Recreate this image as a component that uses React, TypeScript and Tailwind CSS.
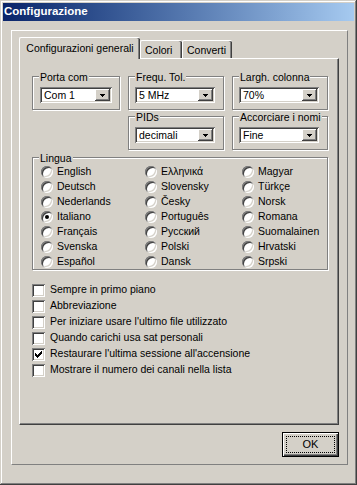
import React from 'react';

const sunken =
  'shadow-[inset_1px_1px_#808080,inset_-1px_-1px_#ffffff,inset_2px_2px_#404040,inset_-2px_-2px_#d4d0c8]';

const LANGS: string[][] = [
  ['English', 'Deutsch', 'Nederlands', 'Italiano', 'Français', 'Svenska', 'Español'],
  ['Ελληνικά', 'Slovensky', 'Česky', 'Português', 'Русский', 'Polski', 'Dansk'],
  ['Magyar', 'Türkçe', 'Norsk', 'Romana', 'Suomalainen', 'Hrvatski', 'Srpski'],
];

const OPTIONS = [
  { label: 'Sempre in primo piano', checked: false },
  { label: 'Abbreviazione', checked: false },
  { label: "Per iniziare usare l'ultimo file utilizzato", checked: false },
  { label: 'Quando carichi usa sat personali', checked: false },
  { label: "Restaurare l'ultima sessione all'accensione", checked: true },
  { label: 'Mostrare il numero dei canali nella lista', checked: false },
];

const GroupBox: React.FC<{ title: string; className?: string; children?: React.ReactNode }> = ({
  title,
  className = '',
  children,
}) => (
  <div
    className={`relative border border-[#808080] shadow-[1px_1px_0_#ffffff,inset_1px_1px_0_#ffffff] ${className}`}
  >
    <span className="absolute left-[6px] -top-[6px] bg-[#d4d0c8] px-px leading-[12px] whitespace-nowrap">
      {title}
    </span>
    {children}
  </div>
);

const Combo: React.FC<{ value: string; width: string }> = ({ value, width }) => (
  <div className={`flex h-[16px] items-stretch bg-white p-[2px] ${sunken} ${width}`}>
    <span className="flex flex-1 items-center pl-[2px] leading-none">{value}</span>
    <div className="flex w-[15px] items-center justify-center bg-[#d4d0c8] shadow-[inset_-1px_-1px_#404040,inset_1px_1px_#ffffff,inset_-2px_-2px_#808080]">
      <svg width="5" height="3" viewBox="0 0 5 3" shapeRendering="crispEdges">
        <path d="M0 0h5v1H0z M1 1h3v1H1z M2 2h1v1H2z" fill="#000" />
      </svg>
    </div>
  </div>
);

const Radio: React.FC<{ label: string; checked?: boolean }> = ({ label, checked }) => (
  <div className="flex h-[15px] items-center">
    <div
      className={`flex h-[12px] w-[12px] shrink-0 items-center justify-center rounded-full bg-white ${sunken}`}
    >
      {checked && <div className="h-[4px] w-[4px] rounded-full bg-black" />}
    </div>
    <span className="ml-[4px] whitespace-nowrap">{label}</span>
  </div>
);

const Check: React.FC<{ label: string; checked?: boolean }> = ({ label, checked }) => (
  <div className="flex h-[16px] items-center">
    <div className={`flex h-[13px] w-[13px] shrink-0 items-center justify-center bg-white ${sunken}`}>
      {checked && (
        <svg width="7" height="7" viewBox="0 0 7 7" shapeRendering="crispEdges">
          <path
            d="M0 2h1v3H0z M1 3h1v3H1z M2 4h1v3H2z M3 3h1v3H3z M4 2h1v3H4z M5 1h1v3H5z M6 0h1v3H6z"
            fill="#000"
          />
        </svg>
      )}
    </div>
    <span className="ml-[5px] whitespace-nowrap">{label}</span>
  </div>
);

export default function App() {
  return (
    <div className="flex h-[485px] w-[357px] flex-col bg-[#d4d0c8] p-[3px] font-[family-name:'Liberation_Sans',Arial,sans-serif] text-[10.5px] text-black shadow-[inset_-1px_-1px_#404040,inset_1px_1px_#d4d0c8,inset_-2px_-2px_#808080,inset_2px_2px_#ffffff]">
      {/* title bar */}
      <div className="flex h-[18px] items-center bg-linear-to-r from-[#0a246a] to-[#a6caf0] pl-[1px] text-[11.5px] font-bold text-white">
        Configurazione
      </div>

      {/* outer panel */}
      <div className="ml-[8px] mt-[9px] flex h-[435px] w-[337px] flex-col border border-b-[#808080] border-l-white border-r-[#808080] border-t-white pl-[7px] pr-[8px]">
        {/* tabs */}
        <div className="mt-[6px] flex h-[21px] items-end">
          <div className="relative z-10 -mb-px flex h-[22px] w-[121px] justify-center rounded-t-[2px] border-l border-t border-l-white border-t-white bg-[#d4d0c8] pt-[3px] shadow-[inset_-1px_0_#404040,inset_-2px_0_#808080]">
            Configurazioni generali
          </div>
          <div className="flex h-[18px] w-[42px] rounded-t-[2px] border-l border-t border-l-white border-t-white pl-[4px] pt-[2px] shadow-[inset_-1px_0_#404040,inset_-2px_0_#808080]">
            Colori
          </div>
          <div className="flex h-[18px] w-[50px] rounded-t-[2px] border-l border-t border-l-white border-t-white pl-[4px] pt-[2px] shadow-[inset_-1px_0_#404040,inset_-2px_0_#808080]">
            Converti
          </div>
        </div>

        {/* tab page */}
        <div className="flex h-[367px] flex-col border-b border-l border-r border-t border-b-[#404040] border-l-white border-r-[#404040] border-t-white pl-[12px] pt-[17px] shadow-[inset_-1px_-1px_#808080]">
          <div className="grid grid-cols-[88px_96px_96px] gap-x-[8px] gap-y-[6px]">
            <GroupBox title="Porta com" className="h-[34px] pl-[7px] pt-[10px]">
              <Combo value="Com 1" width="w-[72px]" />
            </GroupBox>
            <GroupBox title="Frequ. Tol." className="h-[34px] pl-[6px] pt-[10px]">
              <Combo value="5 MHz" width="w-[80px]" />
            </GroupBox>
            <GroupBox title="Largh. colonna" className="h-[34px] pl-[6px] pt-[10px]">
              <Combo value="70%" width="w-[80px]" />
            </GroupBox>
            <GroupBox title="PIDs" className="col-start-2 h-[34px] pl-[6px] pt-[10px]">
              <Combo value="decimali" width="w-[80px]" />
            </GroupBox>
            <GroupBox title="Accorciare i nomi" className="h-[34px] pl-[6px] pt-[10px]">
              <Combo value="Fine" width="w-[80px]" />
            </GroupBox>
          </div>

          <GroupBox title="Lingua" className="mt-[7px] h-[113px] w-[296px] pl-[8px] pt-[6px]">
            <div className="grid grid-cols-[104px_97px_1fr]">
              {LANGS[0].map((_, row) =>
                LANGS.map((col, c) => (
                  <Radio key={`${row}-${c}`} label={col[row]} checked={col[row] === 'Italiano'} />
                ))
              )}
            </div>
          </GroupBox>

          <div className="mt-[12px] flex flex-col">
            {OPTIONS.map((o) => (
              <Check key={o.label} label={o.label} checked={o.checked} />
            ))}
          </div>
        </div>

        {/* button row */}
        <div className="mt-[7px] flex justify-end">
          <button className="h-[25px] w-[57px] border border-black bg-[#d4d0c8] p-[3px] shadow-[inset_1px_1px_#ffffff,inset_-1px_-1px_#404040,inset_-2px_-2px_#808080]">
            <div className="flex h-full w-full items-center justify-center border border-dotted border-black text-[11px]">
              OK
            </div>
          </button>
        </div>
      </div>
    </div>
  );
}
